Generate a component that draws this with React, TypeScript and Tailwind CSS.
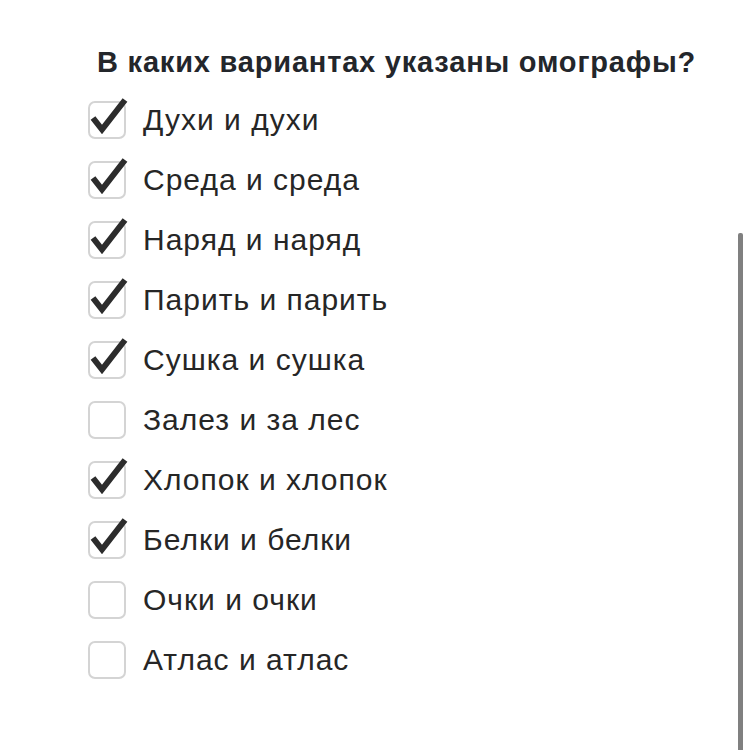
import React from "react";

const items: [string, boolean][] = [
  ["Духи и духи", true],
  ["Среда и среда", true],
  ["Наряд и наряд", true],
  ["Парить и парить", true],
  ["Сушка и сушка", true],
  ["Залез и за лес", false],
  ["Хлопок и хлопок", true],
  ["Белки и белки", true],
  ["Очки и очки", false],
  ["Атлас и атлас", false],
];

function Box({ checked }: { checked: boolean }) {
  return (
    <div className="relative w-[38px] h-[38px] shrink-0 rounded-[7px] border-2 border-[#d4d4d4] bg-white">
      {checked && (
        <svg className="absolute left-[-2px] top-[-2px] overflow-visible" width="38" height="38" viewBox="0 0 38 38">
          <path d="M5 17 L14 28.5 L37 -1" fill="none" stroke="#2c2c2c" strokeWidth="6" strokeLinecap="butt" strokeLinejoin="miter" />
        </svg>
      )}
    </div>
  );
}

export default function App() {
  return (
    <div className="relative w-[750px] h-[750px] bg-white overflow-hidden" style={{ fontFamily: '"Liberation Sans", Arial, sans-serif' }}>
      <div className="pt-[43px] pl-[97px]">
        <h1 className="text-[29px] font-bold leading-[38px] text-[#23262b] tracking-[0.8px]">В каких вариантах указаны омографы?</h1>
      </div>
      <div className="pl-[88px] pt-[20px] flex flex-col gap-[22px]">
        {items.map(([t, c]) => (
          <div key={t} className="flex items-center gap-[17px] h-[38px]">
            <Box checked={c} />
            <span className="text-[30px] leading-[38px] text-[#262626] tracking-[1px]">{t}</span>
          </div>
        ))}
      </div>
      <div className="absolute left-[738px] top-[233px] w-[5px] h-[517px] bg-[#808080] rounded-t-[2px]" />
    </div>
  );
}
